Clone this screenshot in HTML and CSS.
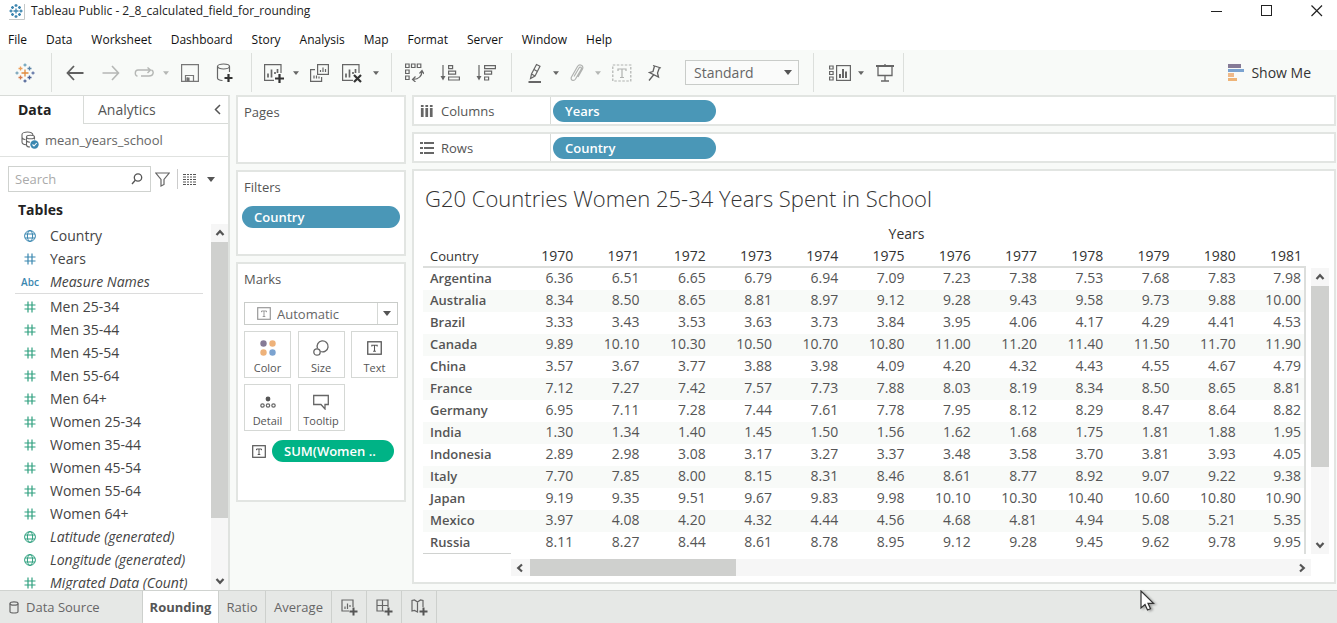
FILE: index.html
```html
<!DOCTYPE html>
<html lang="en">
<head>
<meta charset="utf-8">
<title>Tableau Public - 2_8_calculated_field_for_rounding</title>
<link rel="stylesheet" href="styles.css">
</head>
<body>
<svg class="defs" aria-hidden="true">
  <symbol id="caret" viewBox="0 0 8 5"><path d="M0 0h8L4 5z" fill="currentColor"/></symbol>
  <symbol id="hash" viewBox="0 0 12 12"><path d="M4 .5v11M8 .5v11M.5 4h11M.5 8h11" stroke="currentColor" stroke-width="1.2" fill="none"/></symbol>
  <symbol id="globe" viewBox="0 0 12 12"><g fill="none" stroke="currentColor"><circle cx="6" cy="6" r="5.4"/><ellipse cx="6" cy="6" rx="2.6" ry="5.4"/><path d="M1 4h10M1 8h10"/></g></symbol>
  <symbol id="tbox" viewBox="0 0 14 13"><rect x=".7" y=".7" width="12.6" height="11.6" fill="none" stroke="currentColor" stroke-width="1.2"/><path d="M4.5 5.2V4h5v1.2M7 4v5.5M5.7 9.5h2.6" fill="none" stroke="currentColor"/></symbol>
  <symbol id="chev" viewBox="0 0 10 10"><path d="M1.5 7L5 3.2 8.500 7" fill="none" stroke="currentColor" stroke-width="2.2"/></symbol>
</svg>
<div class="app">
  <header class="titlebar">
    <svg width="17" height="17" viewBox="0 0 17 17" fill="none"><path d="M16.500 1v15.500H1" stroke="#c4c8c8"/><g stroke="#3d86b0" stroke-width="1.300"><path d="M8 5.500v5M5.500 8h5M8 1v3M6.500 2.500h3M8 12v3M6.500 13.500h3M1.500 8h3M3 6.500v3M11.500 8h3M13 6.500v3M3 4.500h3M4.500 3v3M10 4.500h3M11.500 3v3M3 11.500h3M4.500 10v3M10 11.500h3M11.500 10v3"/></g></svg>
    <h1>Tableau Public - 2_8_calculated_field_for_rounding</h1>
    <div class="window-controls">
      <button type="button" aria-label="Minimize"><svg width="12" height="12"><path d="M0 6.500h11" stroke="#222"/></svg></button>
      <button type="button" aria-label="Maximize"><svg width="12" height="12"><rect x=".5" y=".5" width="10" height="10" fill="none" stroke="#222"/></svg></button>
      <button type="button" aria-label="Close"><svg width="12" height="12"><path d="M.5.500l10.500 10.500M11 .5L.5 11" stroke="#222" stroke-width="1.200"/></svg></button>
    </div>
  </header>
  <nav class="menubar" aria-label="Main menu">
    <button type="button">File</button><button type="button">Data</button><button type="button">Worksheet</button><button type="button">Dashboard</button><button type="button">Story</button><button type="button">Analysis</button><button type="button">Map</button><button type="button">Format</button><button type="button">Server</button><button type="button">Window</button><button type="button">Help</button>
  </nav>

  <div class="toolbar" role="toolbar" aria-label="Worksheet tools">
    <div class="group g-logo">
      <button type="button" aria-label="Start page"><svg width="20" height="20" viewBox="0 0 20 20" fill="none" stroke-width="1.300"><path d="M10 6.500v7M6.500 10h7" stroke="#e08a3c"/><path d="M5.500 3.500v4M3.500 5.500h4" stroke="#eda05a"/><path d="M14.500 3.500v4M12.500 5.500h4" stroke="#5c86a8"/><path d="M5.500 12.500v4M3.500 14.500h4" stroke="#d4794a"/><path d="M14.500 12.500v4M12.500 14.500h4" stroke="#4a5f92"/><path d="M10 .5v3M8.500 2h3" stroke="#6fa5bd"/><path d="M10 16.500v3M8.500 18h3" stroke="#54699a"/><path d="M.5 10h3M2 8.500v3" stroke="#7aa6ba"/><path d="M16.500 10h3M18 8.500v3" stroke="#6478a8"/></svg></button>
    </div>
    <div class="group g-file">
      <button type="button" class="w36" aria-label="Undo"><svg width="18" height="16" viewBox="0 0 18 16" fill="none" stroke="#606060" stroke-width="1.800"><path d="M17.500 8H1.500M8 1L1.500 8 8 15"/></svg></button>
      <button type="button" class="w36" aria-label="Redo"><svg width="18" height="16" viewBox="0 0 18 16" fill="none" stroke="#b5b7b5" stroke-width="1.600"><path d="M.5 8h16M10 1l6.500 7L10 15"/></svg></button>
      <button type="button" class="w30" aria-label="Replay"><svg width="20" height="12" viewBox="0 0 20 12" fill="none" stroke="#b5b7b5" stroke-width="1.400"><path d="M3.500 9C.5 9 .5 3 4 3h12M13.500.500L16.500 3l-3 3M7 9h8c5 0 5-5 2.500-6"/></svg></button>
      <button type="button" class="w14 faint" aria-label="Replay options"><svg width="6" height="4"><use href="#caret"/></svg></button>
      <button type="button" class="w34" aria-label="Save"><svg width="18" height="18" viewBox="0 0 18 18" fill="none" stroke="#777" stroke-width="1.200"><path d="M.6.600h16.800v16.800H.6zM4.500 17v-5.500h8V17M6.500 17v-3.500"/><path d="M6 14h2v3H6z" fill="#666"/></svg></button>
      <button type="button" class="w36" aria-label="New data source"><svg width="18" height="20" viewBox="0 0 18 20" fill="none" stroke="#666" stroke-width="1.200"><ellipse cx="7.500" cy="3.500" rx="6" ry="2.500"/><path d="M1.500 3.500V15c0 1.300 1.800 2.200 5 2.500M13.500 3.500V9"/><path d="M12.500 11v8M8.500 15h8" stroke="#333" stroke-width="2.200"/></svg></button>
    </div>
    <div class="group g-sheet">
      <button type="button" class="w30" aria-label="New worksheet"><svg width="22" height="20" viewBox="0 0 22 20" fill="none" stroke="#666" stroke-width="1.200"><path d="M18 10V1.600H1.600V17.400H11"/><path d="M5 14.500v-4M8.500 14.500v-8M12 11v-2M14.500 10V6" stroke-width="1.700"/><path d="M16.500 11v9M12 15.500h9" stroke="#333" stroke-width="2.200"/></svg></button>
      <button type="button" class="w14" aria-label="New worksheet options"><svg width="6" height="4"><use href="#caret"/></svg></button>
      <button type="button" class="w32" aria-label="Duplicate sheet"><svg width="19" height="18" viewBox="0 0 19 18" fill="none" stroke="#666" stroke-width="1.200"><rect x="7.600" y=".6" width="10.800" height="9.800"/><path d="M5 5.600H.6v11.800h11v-4.500M10.500 8V6M13 8V3.500M15.500 8V5M4 14.500v-3M6.500 14.500v-3M9 14.500v-2"/></svg></button>
      <button type="button" class="w34" aria-label="Clear sheet"><svg width="22" height="20" viewBox="0 0 22 20" fill="none" stroke="#666" stroke-width="1.200"><path d="M18 10V1.600H1.600V17.400H12"/><path d="M5 14.500v-4M8.500 14.500v-8M12 11v-2M14.500 10V6" stroke-width="1.700"/><path d="M13 12l7 7M20 12l-7 7" stroke="#333" stroke-width="2.200"/></svg></button>
      <button type="button" class="w14" aria-label="Clear options"><svg width="6" height="4"><use href="#caret"/></svg></button>
    </div>
    <div class="group g-sort">
      <button type="button" class="w36" aria-label="Swap rows and columns"><svg width="19" height="19" viewBox="0 0 19 19" fill="none" stroke="#666" stroke-width="1.200"><path d="M.6 1h3.500v3.500H.6zM6.500 1H10v3.500H6.500zM12.300 1h3.500v3.500h-3.500zM.6 7h3.500v3.500H.6zM.6 13h3.500v3.500H.6zM17 8c0 5-3 8-9 8.500M14.500 10.500L17 7.500l2 3.500M10.500 13.500L7.500 16.500l3 2.500"/></svg></button>
      <button type="button" class="w36" aria-label="Sort ascending"><svg width="20" height="18" viewBox="0 0 20 18" fill="none" stroke="#666" stroke-width="1.200"><path d="M3 1v14M8.600 1.600h4v3h-4zM8.600 7.100h7v3h-7zM8.600 13h10.800v3H8.600z"/><path d="M.5 12h5L3 16.500z" fill="#666" stroke="none"/></svg></button>
      <button type="button" class="w36" aria-label="Sort descending"><svg width="20" height="18" viewBox="0 0 20 18" fill="none" stroke="#666" stroke-width="1.200"><path d="M3 1v14M8.600 1.600h10.800v3H8.600zM8.600 7.100h7v3h-7zM8.600 13h4v3h-4z"/><path d="M.5 12h5L3 16.500z" fill="#666" stroke="none"/></svg></button>
    </div>
    <div class="group g-format">
      <button type="button" class="w28" aria-label="Highlight"><svg width="14" height="20" viewBox="0 0 14 20" fill="none" stroke="#666" stroke-width="1.200"><path d="M8.500 1.500l3.500 1.700L7 13l-4.500 2.500L3.500 11zM3.500 11L7 13M6 6.500L9.500 8.500"/><path d="M.5 19H13" stroke-width="2"/></svg></button>
      <button type="button" class="w14" aria-label="Highlight options"><svg width="6" height="4"><use href="#caret"/></svg></button>
      <button type="button" class="w28" aria-label="Group members"><svg width="14" height="18" viewBox="0 0 14 18" fill="none" stroke="#b0b2b0" stroke-width="1.200"><path d="M4 12.500L9 4c1-1.700 3.200-.5 2.200 1.200L5.500 15c-1.800 2.800-5.500 1-4-2L7.500 2.500C9.500-.5 14 1.500 12.500 5L8 13"/></svg></button>
      <button type="button" class="w14 faint" aria-label="Group options"><svg width="6" height="4"><use href="#caret"/></svg></button>
      <button type="button" class="w34" aria-label="Show mark labels"><svg width="20" height="18" viewBox="0 0 20 18" fill="none" stroke="#b0b2b0" stroke-width="1.200"><rect x=".8" y="1" width="18" height="16" stroke-dasharray="2.500 1.500"/><path d="M6 7V5h8v2M10 5v8.500M8 13.500h4"/></svg></button>
      <button type="button" class="w32" aria-label="Fix axes"><svg width="14" height="18" viewBox="0 0 14 18" fill="none" stroke="#606060" stroke-width="1.300"><path d="M5 1.500l8 2.500M6.500 2L5 7.500 1.500 8.500l9 4.500L9.500 9l2-5.500M5.500 11L1 16.500"/></svg></button>
      <span class="select-wrap fit"><select aria-label="Fit"><option>Standard</option></select><svg width="8" height="5"><use href="#caret"/></svg></span>
    </div>
    <div class="group g-show">
      <button type="button" class="w28" aria-label="Show or hide cards"><svg width="22" height="18" viewBox="0 0 22 18" fill="none" stroke="#666" stroke-width="1.200"><rect x="7.600" y="1.600" width="13.800" height="14.800"/><path d="M.6 2h3.500v3H.6zM.6 7.500h3.500v3H.6zM.6 13h3.500v3H.6z"/><path d="M11 14v-4M14 14V5M17 14V7.500" stroke-width="2"/></svg></button>
      <button type="button" class="w14" aria-label="Card options"><svg width="6" height="4"><use href="#caret"/></svg></button>
      <button type="button" class="w34" aria-label="Presentation mode"><svg width="18" height="18" viewBox="0 0 18 18" fill="none" stroke="#666" stroke-width="1.300"><path d="M2 2v9.500h14V2M9 11.500V17M5 17h8M9 0v2"/><path d="M0 2h18" stroke-width="2"/></svg></button>
    </div>
    <button type="button" class="show-me"><svg width="16" height="18"><path fill="#857a96" d="M0 0h13v4H0z"/><path fill="#7ba3d0" d="M0 5h16v3H0z"/><path fill="#eeb98a" d="M0 9h6v4H0z"/><path fill="#eeb478" d="M0 14h9v3H0z"/></svg>Show Me</button>
  </div>

  <main class="workspace">
    <aside class="data-pane">
      <div class="pane-tabs">
        <button type="button" class="pane-tab active">Data</button>
        <button type="button" class="pane-tab">Analytics<svg width="7" height="11"><path d="M6 1L1.500 5.500 6 10" fill="none" stroke="#555" stroke-width="1.500"/></svg></button>
      </div>
      <div class="source"><svg width="18" height="18" viewBox="0 0 18 18" fill="none" stroke="#666" stroke-width="1.100"><path d="M12 4.500C12 2 9 1 6.500 1S1 2 1 3.500V11c0 1.500 2 2.500 4 2.800M1 6.500C1.500 8 3 8.500 4.500 8.800"/><ellipse cx="9.500" cy="6" rx="4" ry="1.800"/><path d="M5.500 6v8c0 1 1.500 2 3.500 2M5.500 10c.8.800 2 1.200 3.500 1.200M13.500 6v2.500"/><circle cx="13.500" cy="13.500" r="4.200" fill="#3a87b0" stroke="none"/><path d="M11.500 13.500l1.500 1.500 2.700-3" stroke="#fff"/></svg><span>mean_years_school</span></div>
      <div class="search-row">
        <label class="search"><input type="text" placeholder="Search" aria-label="Search fields"><svg width="12" height="12" viewBox="0 0 12 12" fill="none" stroke="#555" stroke-width="1.300"><circle cx="7" cy="4.500" r="3.700"/><path d="M4.300 7.300L1 11"/></svg></label>
        <button type="button" aria-label="Filter"><svg width="15" height="15" viewBox="0 0 15 15" fill="none" stroke="#666" stroke-width="1.200"><path d="M.8 1h13.400L9 7.500v5L6 14V7.500z"/></svg></button>
        <button type="button" class="view-as" aria-label="View as list"><svg width="14" height="11" fill="none" stroke="#555"><path d="M0 .5h14M0 3h14M0 5.500h14M0 8h14M0 10.500h14" stroke-dasharray="3 1 2 1 2 1 3 1"/></svg><svg width="8" height="5"><use href="#caret"/></svg></button>
      </div>
      <h2>Tables</h2>
      <div class="fields">
        <ul id="field-list"></ul>
        <div class="scroll vertical"><svg width="10" height="10"><use href="#chev"/></svg><div class="thumb"></div><svg class="down" width="10" height="10"><use href="#chev"/></svg></div>
      </div>
    </aside>

    <section class="cards">
      <div class="card pages"><h3>Pages</h3></div>
      <div class="card filters"><h3>Filters</h3><button type="button" class="pill">Country</button></div>
      <div class="card marks">
        <h3>Marks</h3>
        <span class="select-wrap mark-type"><svg class="type" width="14" height="13"><use href="#tbox"/></svg><select aria-label="Mark type"><option>Automatic</option></select><svg width="8" height="5"><use href="#caret"/></svg></span>
        <div class="mark-buttons">
          <button type="button"><svg width="18" height="18"><circle cx="4.500" cy="4.500" r="3.200" fill="#857a96"/><circle cx="13.500" cy="4.500" r="3.200" fill="#eeb27a"/><circle cx="4.500" cy="13.500" r="3.200" fill="#eeb27a"/><circle cx="13.500" cy="13.500" r="3.200" fill="#7ba3d0"/></svg>Color</button>
          <button type="button"><svg width="18" height="18" fill="none" stroke="#666" stroke-width="1.300"><path d="M5.500 9.500A5.500 5.500 0 1 1 8.500 12.500"/><circle cx="5" cy="13" r="3.200"/></svg>Size</button>
          <button type="button"><svg width="15" height="18" viewBox="0 0 14 13" color="#555"><use href="#tbox"/></svg>Text</button>
          <button type="button"><svg width="18" height="18" fill="none" stroke="#666" stroke-width="1.200"><circle cx="9" cy="7" r="2.400" fill="#555" stroke="none"/><circle cx="3.500" cy="13.500" r="1.700"/><circle cx="9" cy="13.500" r="1.700"/><circle cx="14.500" cy="13.500" r="1.700"/></svg>Detail</button>
          <button type="button"><svg width="18" height="18" fill="none" stroke="#666" stroke-width="1.300"><path d="M1.700 3.500h14.600v9H13V17l-4-4.500H1.700z"/></svg>Tooltip</button>
        </div>
        <div class="mark-pill"><svg width="14" height="13"><use href="#tbox"/></svg><button type="button" class="pill green">SUM(Women ..</button></div>
      </div>
    </section>

    <section class="sheet">
      <div class="shelf"><div class="shelf-name"><svg width="14" height="14"><path d="M1 1h3v2H1zM6 1h3v2H6zM11 1h3v2h-3zM1 4h3v9H1zM6 4h3v9H6zM11 4h3v9h-3z" transform="scale(.9 1)" fill="#666"/></svg>Columns</div><button type="button" class="pill">Years</button></div>
      <div class="shelf"><div class="shelf-name"><svg width="14" height="14"><path d="M0 1h3v2H0zM4 1h10v2H4zM0 6h3v2H0zM4 6h10v2H4zM0 11h3v2H0zM4 11h10v2H4z" fill="#666"/></svg>Rows</div><button type="button" class="pill">Country</button></div>
      <div class="view">
        <h2>G20 Countries Women 25-34 Years Spent in School</h2>
        <div class="crosstab">
          <table>
            <thead>
              <tr class="axis"><td></td><th colspan="12" scope="colgroup">Years</th></tr>
              <tr id="years"><th scope="col">Country</th></tr>
            </thead>
            <tbody id="rows"></tbody>
          </table>
          <div class="scroll vertical"><svg width="10" height="10"><use href="#chev"/></svg><div class="thumb"></div><svg class="down" width="10" height="10"><use href="#chev"/></svg></div>
          <div class="scroll horizontal"><svg class="left" width="10" height="10"><use href="#chev"/></svg><div class="thumb"></div><svg class="right" width="10" height="10"><use href="#chev"/></svg></div>
        </div>
      </div>
    </section>
  </main>

  <footer class="tabs">
    <button type="button" class="source-tab"><svg width="10" height="13" fill="none" stroke="#666" stroke-width="1.200"><ellipse cx="5" cy="2.500" rx="4" ry="1.700"/><path d="M1 2.500v8c0 2 8 2 8 0v-8"/></svg>Data Source</button>
    <button type="button" class="active">Rounding</button>
    <button type="button" class="ratio">Ratio</button>
    <button type="button" class="average">Average</button>
    <button type="button" class="add" aria-label="New worksheet"><svg width="17" height="17" viewBox="0 0 17 17" fill="none" stroke="#666" stroke-width="1.200"><path d="M12 8V1H1v11h7M4 10V7.500M6.500 10V4.500M9 8V6"/><path d="M12.500 8.500v8M8.500 12.500h8" stroke="#555" stroke-width="2"/></svg></button>
    <button type="button" class="add" aria-label="New dashboard"><svg width="17" height="17" viewBox="0 0 17 17" fill="none" stroke="#666" stroke-width="1.200"><path d="M12 8V1H1v11h7M1 6.500h11M6.500 1v11"/><path d="M12.500 8.500v8M8.500 12.500h8" stroke="#555" stroke-width="2"/></svg></button>
    <button type="button" class="add" aria-label="New story"><svg width="17" height="17" viewBox="0 0 17 17" fill="none" stroke="#666" stroke-width="1.200"><path d="M12 8V1.500L9.500 1 6.500 3 3.500 1 1 1.500V12l2.500-.5L6.500 13V3"/><path d="M12.500 8.500v8M8.500 12.500h8" stroke="#555" stroke-width="2"/></svg></button>
  </footer>
  <svg class="cursor" width="16" height="24" viewBox="0 0 16 24" aria-hidden="true"><path d="M1 1v17l4-3.500L7.500 20l3-1.300L8 13.300h5.500z" fill="#fff" stroke="#333" stroke-width="1.200"/></svg>
</div>
<script src="app.js"></script>
</body>
</html>
```

FILE: app.js
```js
const fields = [
  ["globe", "Country", "dim"], ["hash", "Years", "dim"], ["abc", "Measure Names", "dim auto last"],
  ["hash", "Men 25-34"], ["hash", "Men 35-44"], ["hash", "Men 45-54"], ["hash", "Men 55-64"], ["hash", "Men 64+"],
  ["hash", "Women 25-34"], ["hash", "Women 35-44"], ["hash", "Women 45-54"], ["hash", "Women 55-64"], ["hash", "Women 64+"],
  ["globe", "Latitude (generated)", "auto"], ["globe", "Longitude (generated)", "auto"], ["hash", "Migrated Data (Count)", "auto"],
];
document.getElementById("field-list").innerHTML = fields.map(([icon, name, cls = ""]) => {
  const mark = icon === "abc" ? "Abc" : `<svg width="12" height="12"><use href="#${icon}"/></svg>`;
  return `<li class="${cls}"><span class="kind">${mark}</span><span>${name}</span></li>`;
}).join("");

const data = {
  Argentina: "6.36 6.51 6.65 6.79 6.94 7.09 7.23 7.38 7.53 7.68 7.83 7.98",
  Australia: "8.34 8.50 8.65 8.81 8.97 9.12 9.28 9.43 9.58 9.73 9.88 10.00",
  Brazil: "3.33 3.43 3.53 3.63 3.73 3.84 3.95 4.06 4.17 4.29 4.41 4.53",
  Canada: "9.89 10.10 10.30 10.50 10.70 10.80 11.00 11.20 11.40 11.50 11.70 11.90",
  China: "3.57 3.67 3.77 3.88 3.98 4.09 4.20 4.32 4.43 4.55 4.67 4.79",
  France: "7.12 7.27 7.42 7.57 7.73 7.88 8.03 8.19 8.34 8.50 8.65 8.81",
  Germany: "6.95 7.11 7.28 7.44 7.61 7.78 7.95 8.12 8.29 8.47 8.64 8.82",
  India: "1.30 1.34 1.40 1.45 1.50 1.56 1.62 1.68 1.75 1.81 1.88 1.95",
  Indonesia: "2.89 2.98 3.08 3.17 3.27 3.37 3.48 3.58 3.70 3.81 3.93 4.05",
  Italy: "7.70 7.85 8.00 8.15 8.31 8.46 8.61 8.77 8.92 9.07 9.22 9.38",
  Japan: "9.19 9.35 9.51 9.67 9.83 9.98 10.10 10.30 10.40 10.60 10.80 10.90",
  Mexico: "3.97 4.08 4.20 4.32 4.44 4.56 4.68 4.81 4.94 5.08 5.21 5.35",
  Russia: "8.11 8.27 8.44 8.61 8.78 8.95 9.12 9.28 9.45 9.62 9.78 9.95",
};
const years = document.getElementById("years");
for (let y = 1970; y <= 1981; y++) years.insertAdjacentHTML("beforeend", `<th scope="col">${y}</th>`);
document.getElementById("rows").innerHTML = Object.entries(data).map(([country, values]) =>
  `<tr><th scope="row">${country}</th>${values.split(" ").map(v => `<td>${v}</td>`).join("")}</tr>`).join("");
```

FILE: styles.css
```css
* { box-sizing: border-box; }
body { margin: 0; font: 13px/18px "Open Sans", "Noto Sans", sans-serif; color: #555; }
h1, h2, h3, ul { margin: 0; padding: 0; font-weight: 400; }
ul { list-style: none; }
button { display: inline-flex; align-items: center; justify-content: center; margin: 0; padding: 0; border: 0; background: none; font: inherit; color: inherit; }
svg { flex: none; display: block; }
.defs { position: absolute; width: 0; height: 0; }

.app { position: relative; display: flex; flex-direction: column; height: 100vh; overflow: hidden; background: #f8faf8; }

.titlebar { display: flex; align-items: center; height: 24px; padding: 0 14px 2px 8px; gap: 6px; background: #fff; color: #222; }
.titlebar h1 { font-size: 12px; line-height: 18px; }
.window-controls { display: flex; gap: 38px; margin-left: auto; }
.menubar { display: flex; gap: 19px; height: 26px; padding: 0 8px; background: #fff; color: #111; font-size: 12px; line-height: 18px; }
.menubar button { height: 32px; }

.toolbar { display: flex; height: 45px; padding: 3px 0; color: #666; }
.group { display: flex; align-items: center; border-right: 1px solid #dcdfdc; }
.g-logo { padding: 0 16px 0 15px; }
.g-file { padding: 0 8px 0 5px; }
.g-sheet { padding: 0 8px 0 7px; }
.g-sort { padding: 0 7px 0 4px; }
.g-format { padding: 0 14px 0 9px; }
.g-show { padding: 0 1px 0 12px; }
.w14 { width: 14px; } .w28 { width: 28px; } .w30 { width: 30px; } .w32 { width: 32px; } .w34 { width: 34px; } .w36 { width: 36px; }
.faint { color: #b5b7b5; }
.select-wrap { position: relative; display: flex; align-items: center; border: 1px solid #c9ccc9; background: #fff; }
.select-wrap select { width: 100%; height: 100%; border: 0; background: none; appearance: none; font: inherit; color: #666; }
.select-wrap > svg:last-child { position: absolute; right: 6px; color: #555; }
.fit { width: 114px; height: 25px; margin-left: 14px; background: #fafbfa; font-size: 14px; }
.fit select { padding: 0 8px; }
.show-me { gap: 7px; margin: 0 26px 0 auto; color: #333; font-size: 14px; }

.workspace { flex: 1; display: grid; grid-template-columns: 230px 170px minmax(0, 1fr); column-gap: 6px; min-height: 0; padding-right: 1px; }
.workspace > * { min-height: 0; }
.data-pane { display: flex; flex-direction: column; border-top: 1px solid #d8dbd8; border-right: 2px solid #dfe2df; background: #fff; }
.pane-tabs { display: grid; grid-template-columns: 83px 1fr; height: 28px; font-size: 14px; }
.pane-tab { justify-content: flex-start; padding-left: 18px; }
.pane-tab.active { font-weight: 700; color: #222; }
.pane-tab:not(.active) { justify-content: space-between; padding: 0 7px 0 14px; border: solid #d8dbd8; border-width: 0 0 1px 1px; }
.source { display: flex; align-items: center; gap: 6px; height: 33px; padding-left: 21px; border-bottom: 1px solid #e0e2e0; color: #666; }
.search-row { display: flex; align-items: center; gap: 4px; padding: 9px 14px 7px 8px; }
.search { display: flex; align-items: center; width: 143px; height: 26px; padding: 0 7px 0 6px; border: 1px solid #cfd2cf; }
.search input { flex: 1; min-width: 0; padding: 0; border: 0; outline: 0; font: inherit; }
.search input::placeholder { color: #aaa; }
.view-as { gap: 10px; height: 20px; padding-left: 5px; margin-left: 3px; border-left: 1px solid #ccc; color: #555; }
.data-pane h2 { height: 25px; padding: 1px 0 0 18px; font-size: 14px; line-height: 20px; font-weight: 700; color: #222; }
.fields { flex: 1; display: grid; grid-template-columns: 1fr 17px; min-height: 0; overflow: hidden; }
.fields ul { min-height: 0; color: #444; font-size: 14px; }
.fields li { display: grid; grid-template-columns: 35px 1fr; align-items: center; height: 23px; padding-left: 15px; white-space: nowrap; }
.kind { display: grid; justify-items: center; padding-right: 5px; color: #2fa07f; }
.dim .kind { color: #3a87b0; font-size: 10px; font-weight: 600; line-height: 14px; }
.auto span:last-child { font-style: italic; }
.last { position: relative; margin-bottom: 2px; }
.last::after { content: ""; position: absolute; left: 15px; right: 8px; bottom: -1px; border-bottom: 1px solid #dcdcdc; }

.scroll { display: flex; align-items: center; background: #f6f6f6; color: #555; }
.scroll.vertical { flex-direction: column; padding: 4px 0; gap: 4px; min-height: 0; }
.thumb { background: #cfd0ce; }
.vertical .thumb { width: 100%; flex: 0 0 77%; }
.down { transform: rotate(180deg); margin-top: auto; }
.left { transform: rotate(-90deg); }
.right { transform: rotate(90deg); margin-left: auto; }

.cards { display: flex; flex-direction: column; gap: 6px; }
.card { padding: 6px 6px; border: 2px solid #e2e5e2; background: #fff; }
.card h3 { font-size: 13px; line-height: 18px; }
.pages { height: 69px; }
.filters { height: 86px; padding-left: 4px; padding-right: 4px; }
.filters h3 { padding-left: 2px; }
.marks { height: 240px; }
.pill { justify-content: flex-start; height: 22px; padding: 0 12px; border-radius: 11px; background: #4a97b7; color: #fff; font-weight: 600; }
.filters .pill { width: 100%; margin-top: 10px; }
.mark-type { height: 23px; margin-top: 14px; }
.mark-type .type { margin-left: 12px; color: #999; }
.mark-type select { padding: 0 6px; }
.mark-type::after { content: ""; position: absolute; right: 19px; height: 100%; border-left: 1px solid #d5d8d5; }
.mark-buttons { display: grid; grid-template-columns: repeat(3, 47px); justify-content: space-between; gap: 6px; margin-top: 6px; font-size: 11px; line-height: 14px; }
.mark-buttons button { flex-direction: column; gap: 4px; height: 47px; padding-top: 4px; border: 1px solid #d5d8d5; }
.mark-pill { display: flex; align-items: center; gap: 6px; margin: 9px 4px 0 8px; color: #555; }
.green { flex: 1; background: #00b386; }

.sheet { display: flex; flex-direction: column; gap: 6px; padding-bottom: 6px; }
.shelf { display: flex; align-items: center; height: 31px; border: 2px solid #e2e5e2; background: #fff; }
.shelf-name { display: flex; align-items: center; gap: 7px; width: 137px; height: 100%; padding-left: 6px; border-right: 1px solid #d8dbd8; color: #555; }
.shelf .pill { width: 163px; margin-left: 2px; }
.view { flex: 1; padding: 0 5px 0 9px; border: 2px solid #e2e5e2; background: #fff; }
.view h2 { padding: 11px 2px 0; font: 300 22px/32px "Open Sans", "Noto Sans", sans-serif; color: #333; }
.crosstab { display: grid; grid-template-columns: 88px minmax(0, 1fr) 18px; row-gap: 5px; padding-top: 10px; }
table { grid-column: 1 / 3; width: calc(100% - 5px); border-collapse: separate; border-spacing: 0; table-layout: fixed; }
table td, table th { height: 22px; padding: 0 4px 0 0; line-height: 20px; text-align: right; vertical-align: top; font-weight: 400; font-size: 14px; }
table tr > :first-child { width: 88px; padding-left: 7px; text-align: left; font-size: 13px; }
thead th { color: #333; }
#years th { font-weight: 500; border-bottom: 2px solid #dcdedc; }
thead .axis th { text-align: center; }
tbody th { font-weight: 600; }
tbody td { line-height: 19px; color: #555; }
tbody tr:nth-child(even) { background: #f8faf8; }
tbody td:last-child { padding-right: 3px; border-right: 2px solid #dcdedc; }
tbody tr:last-child th { border-bottom: 1px solid #d0d2d0; }
.crosstab .vertical { margin-top: 44px; }
.crosstab .vertical .thumb { flex-basis: 65%; }
.horizontal { grid-column: 2; height: 17px; padding: 0 4px; gap: 5px; }
.horizontal .thumb { width: 26%; height: 100%; }

.tabs { display: flex; height: 33px; border-top: 1px solid #d0d3d0; background: #e6e8e6; color: #666; }
.tabs button { border-right: 1px solid #cdd0cd; padding: 0 6px; }
.tabs .source-tab { justify-content: flex-start; gap: 7px; width: 143px; padding-left: 9px; }
.tabs .active { width: 76px; background: #fff; font-weight: 700; color: #555; }
.ratio { width: 47px; }
.average { width: 66px; }
.tabs .add { width: 35px; }
.cursor { position: absolute; left: 1140px; bottom: 9px; filter: drop-shadow(2px 1px 1px rgba(0, 0, 0, .3)); }
```
